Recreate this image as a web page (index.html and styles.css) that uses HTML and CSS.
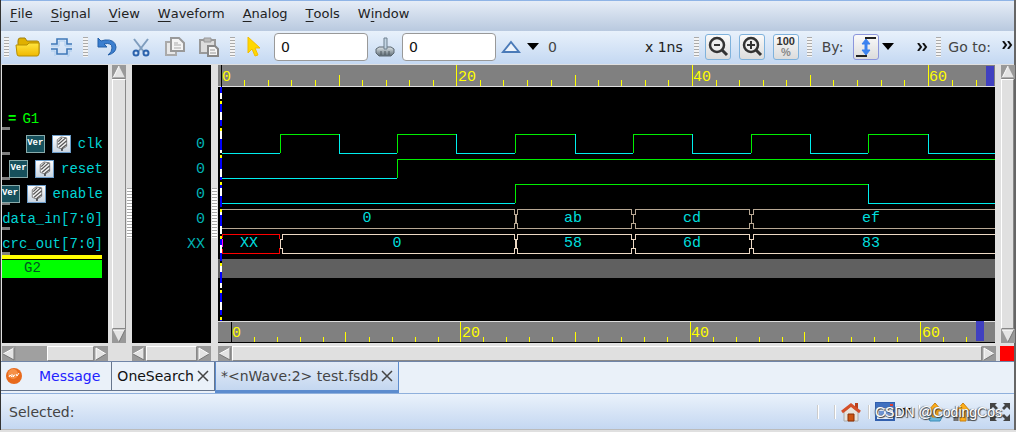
FILE: index.html
```html
<!DOCTYPE html>
<html lang="en">
<head>
<meta charset="utf-8">
<title>nWave</title>
<link rel="stylesheet" href="styles.css">
</head>
<body>
<svg class="defs" aria-hidden="true">
  <defs>
    <linearGradient id="gold" x2="0" y2="1"><stop offset="0" stop-color="#ffe640"/><stop offset="1" stop-color="#f0b800"/></linearGradient>
    <linearGradient id="steel" x2="0" y2="1"><stop offset="0" stop-color="#dfe6ea"/><stop offset="1" stop-color="#5d6b74"/></linearGradient>
    <symbol id="tri-up" viewBox="0 0 14 14"><path d="M7 1L13 13H1z" fill="#e4e4e4"/><path d="M7 1L1 13" stroke="#fff"/><path d="M1 13H13" stroke="#777"/></symbol>
    <symbol id="tri-down" viewBox="0 0 14 14"><path d="M1 1H13L7 13z" fill="#e4e4e4"/><path d="M1 1H13" stroke="#fff"/><path d="M13 1L7 13" stroke="#777"/></symbol>
    <symbol id="tri-left" viewBox="0 0 14 14"><path d="M1 7L12 1V13z" fill="#e4e4e4"/><path d="M1 7L12 1" stroke="#fff"/><path d="M12 1V13L1 7" fill="none" stroke="#777"/></symbol>
    <symbol id="tri-right" viewBox="0 0 14 14"><path d="M2 1L12 7L2 13z" fill="#e4e4e4"/><path d="M2 13V1L12 7" fill="none" stroke="#fff"/><path d="M2 13L12 7" stroke="#777"/></symbol>
    <symbol id="caret" viewBox="0 0 12 7"><path d="M0 0H12L6 7z" fill="#000"/></symbol>
    <symbol id="cross" viewBox="0 0 12 12"><path d="M1 1L11 11M11 1L1 11" stroke="#444" stroke-width="1.5"/></symbol>
    <symbol id="more" viewBox="0 0 11 8"><path d="M1 0L4 4L1 8M6 0L9 4L6 8" fill="none" stroke="#111" stroke-width="2"/></symbol>
    <symbol id="coil" viewBox="0 0 17 17"><path d="M4 4l4-3 6 1v9l-5 3-5-2z" fill="#f4f4f4" stroke="#777"/><path d="M5 6l4-4M5 9l8-7M6 12l8-7M9 13l5-4" stroke="#555" stroke-width="1.3"/><path d="M9 13v3" stroke="#333" stroke-width="1.5"/></symbol>
  </defs>
</svg>

<div class="app">
  <nav class="menubar">
    <button><u>F</u>ile</button>
    <button><u>S</u>ignal</button>
    <button><u>V</u>iew</button>
    <button><u>W</u>aveform</button>
    <button><u>A</u>nalog</button>
    <button><u>T</u>ools</button>
    <button>W<u>i</u>ndow</button>
  </nav>

  <div class="toolbar">
    <span class="grip"></span>
    <button class="tool" aria-label="Open"><svg width="26" height="22" viewBox="0 0 26 22"><path d="M3 5Q3 2 5 2H10L12 5H22Q24 5 24 7V17Q24 19 22 19H4Q3 19 3 17z" fill="#e0b000" stroke="#a08010"/><path d="M1 9H12L14 7H24V17Q24 20 22 20H4Q2 20 2 18z" fill="url(#gold)" stroke="#b89000"/></svg></button>
    <button class="tool" aria-label="Get signals"><svg width="24" height="20" viewBox="0 0 24 20"><path d="M1 7H7V2H17V7H22M1 12H7V17H17V12H22" fill="none" stroke="#3f78b8" stroke-width="1.6"/><path d="M1 9H9V4H15V9H22M1 14H5V19M17 19H19V14H22" fill="none" stroke="#a9cbee"/></svg></button>
    <span class="grip"></span>
    <button class="tool" aria-label="Undo"><svg width="22" height="20" viewBox="0 0 22 20"><path d="M2 1L2 10H11L8 7Q16 5 16 11Q16 15 12 18Q20 16 20 10Q19 2 9 3L5 4z" fill="#3b7fd0" stroke="#2560a8"/></svg></button>
    <button class="tool" aria-label="Cut"><svg width="20" height="20" viewBox="0 0 20 20"><path d="M3 2L13 15M17 2L7 15" stroke="#7f9dbe" stroke-width="2"/><circle cx="5" cy="16" r="2.5" fill="none" stroke="#2b62ac" stroke-width="2"/><circle cx="15" cy="16" r="2.5" fill="none" stroke="#2b62ac" stroke-width="2"/></svg></button>
    <button class="tool" aria-label="Copy"><svg width="22" height="20" viewBox="0 0 22 20"><path d="M2 5H12V18H2z" fill="#e8e8e8" stroke="#aaa" stroke-width="2"/><path d="M7 1H15L20 6V14H7z" fill="#f4f4f4" stroke="#999" stroke-width="2"/><path d="M10 6H14M10 8H17M10 11H17" stroke="#aaa"/></svg></button>
    <button class="tool" aria-label="Paste"><svg width="22" height="20" viewBox="0 0 22 20"><path d="M2 3H17V16H2z" fill="#ddd" stroke="#999" stroke-width="2"/><path d="M6 1H13V5H6z" fill="#bbb" stroke="#999"/><path d="M10 9H17L20 12V19H10z" fill="#f5f5f5" stroke="#888" stroke-width="2"/><path d="M12 13H17M12 16H18" stroke="#999"/></svg></button>
    <span class="grip"></span>
    <button class="tool arrow" aria-label="Select"><svg width="14" height="20" viewBox="0 0 14 20"><path d="M1 0V16L5 12L8 19L11 18L8 11H13z" fill="#ffd800" stroke="#f3bd00"/></svg></button>
    <input class="field" type="text" value="0" aria-label="Cursor time">
    <button class="tool" aria-label="Marker"><svg width="20" height="20" viewBox="0 0 20 20"><path d="M1 12L4 10H16L19 12V16L16 19H4L1 16z" fill="url(#steel)" stroke="#5b6770"/><path d="M6 14V18M10 14V18M14 14V18" stroke="#4c565d"/><path d="M9 1H12V12H9z" fill="#c3d5e4" stroke="#6e808f"/></svg></button>
    <input class="field" type="text" value="0" aria-label="Marker time">
    <button class="tool delta" aria-label="Delta"><svg width="20" height="14" viewBox="0 0 20 14"><path d="M10 2L18 12H2z" fill="#eef4fb" stroke="#4a7ab8" stroke-width="2"/></svg></button>
    <button class="drop" aria-label="Delta options"><svg width="12" height="7"><use href="#caret"/></svg></button>
    <output class="delta-value">0</output>
    <span class="unit">x 1ns</span>
    <span class="grip"></span>
    <div class="boxes">
      <button class="box" aria-label="Zoom out"><svg width="22" height="22" viewBox="0 0 22 22"><circle cx="10" cy="9" r="7" fill="#eee" stroke="#333" stroke-width="2.5"/><path d="M7 9H13" stroke="#333" stroke-width="2"/><path d="M15 14L20 19" stroke="#333" stroke-width="3"/></svg></button>
      <button class="box" aria-label="Zoom in"><svg width="22" height="22" viewBox="0 0 22 22"><circle cx="10" cy="9" r="7" fill="#eee" stroke="#333" stroke-width="2.5"/><path d="M6 9H14M10 5V13" stroke="#333" stroke-width="2"/><path d="M15 14L20 19" stroke="#333" stroke-width="3"/></svg></button>
      <button class="box percent"><span>100</span><span class="sign">%</span></button>
    </div>
    <span class="grip"></span>
    <label class="by" for="by">By:</label>
    <button class="box edge" id="by" aria-label="Any edge"><svg width="24" height="24" viewBox="0 0 24 24"><path d="M11 3H22M2 21H13" stroke="#222" stroke-width="2"/><path d="M12 4L16 9H13V15H16L12 20L8 15H11V9H8z" fill="#3b82f0" stroke="#3b82f0"/></svg></button>
    <button class="drop" aria-label="Edge options"><svg width="12" height="7"><use href="#caret"/></svg></button>
    <button class="more" aria-label="More tools"><svg width="11" height="8"><use href="#more"/></svg></button>
    <span class="grip"></span>
    <span class="goto">Go to:</span>
    <button class="more last" aria-label="More"><svg width="11" height="8"><use href="#more"/></svg></button>
  </div>

  <main class="work">
    <section class="names">
      <div class="row group"><span class="eq">=</span> G1</div>
      <div class="row"><span class="ver">Ver</span><span class="chip"><svg width="17" height="16"><use href="#coil"/></svg></span><span>clk</span></div>
      <div class="row"><span class="ver">Ver</span><span class="chip"><svg width="17" height="16"><use href="#coil"/></svg></span><span>reset</span></div>
      <div class="row"><span class="ver">Ver</span><span class="chip"><svg width="17" height="16"><use href="#coil"/></svg></span><span>enable</span></div>
      <div class="row"><span>data_in[7:0]</span></div>
      <div class="row"><span>crc_out[7:0]</span></div>
      <div class="active"><span>G2</span></div>
    </section>

    <div class="side">
      <div class="vbar">
        <button aria-label="Up"><svg width="14" height="14"><use href="#tri-up"/></svg></button>
        <div class="thumb"></div>
        <button aria-label="Down"><svg width="14" height="14"><use href="#tri-down"/></svg></button>
      </div>
      <div class="splitter"></div>
    </div>

    <section class="values">
      <span>0</span><span>0</span><span>0</span><span>0</span><span>XX</span>
    </section>

    <div class="splitter"></div>

    <section class="wave">
      <svg class="plot" width="100%" height="277" shape-rendering="crispEdges">
        <rect width="100%" height="21" fill="#808080"/>
        <path d="M26 15v6M50 15v6M73 15v6M97 15v6M121 10v11M144 15v6M168 15v6M191 15v6M215 15v6M238 0v21M262 15v6M285 15v6M309 15v6M333 15v6M357 10v11M380 15v6M403 15v6M427 15v6M450 15v6M474 0v21M498 15v6M521 15v6M545 15v6M568 15v6M592 10v11M615 15v6M639 15v6M663 15v6M686 15v6M710 0v21M734 15v6M758 15v6" class="tick"/>
        <g class="scale"><text x="4" y="16">0</text><text x="240" y="16">20</text><text x="475" y="16">40</text><text x="711" y="16">60</text></g>
        <rect x="768" y="1" width="8" height="20" fill="#4040c0"/>
        <path d="M0 21H2000" stroke="#ddd"/>

        <rect y="194" width="100%" height="19" fill="#606060"/>

        <path class="low" d="M3 88H62M121 69V88H179M238 69V88H297M357 69V88H415M474 69V88H533M592 69V88H650M710 69V88H777M3 113H179M3 138H297M650 119V138H777"/>
        <path class="high" d="M62 88V69H121M179 88V69H238M297 88V69H357M415 88V69H474M533 88V69H592M650 88V69H710M179 113V94H777M297 138V119H650"/>

        <path class="bus dim" d="M777 144H535v5h-2v9h2v5H777M3 144H296v5h2v9h-2v5H3zM299 144H413v5h2v9h-2v5H299v-5h-2v-9h2zM417 144H531v5h2v9h-2v5H417v-5h-2v-9h2z"/>
        <path class="bus" d="M777 169H535v5h-2v9h2v5H777M64 169H296v5h2v9h-2v5H64v-5h-2v-9h2zM299 169H413v5h2v9h-2v5H299v-5h-2v-9h2zM417 169H531v5h2v9h-2v5H417v-5h-2v-9h2z"/>
        <path d="M4 169H61v5M4 188H61v-5M4 169v4M4 188v-4" fill="none" stroke="#f00"/>
        <g class="data">
          <text x="149" y="157">0</text><text x="355" y="157">ab</text><text x="474" y="157">cd</text><text x="653" y="157">ef</text>
          <text x="31" y="182">XX</text><text x="179" y="182">0</text><text x="355" y="182">58</text><text x="474" y="182">6d</text><text x="653" y="182">83</text>
        </g>

        <path d="M3 22V256" stroke="#00f" stroke-width="2"/>
        <path d="M3 28V256" stroke="#fff" stroke-width="2" stroke-dasharray="8 11"/>
        <path d="M3 34V256" stroke="#000" stroke-width="2" stroke-dasharray="3 24"/>
        <path d="M3 36V256" stroke="#ff0" stroke-width="2" stroke-dasharray="3 24"/>
        <path d="M3 0V22" stroke="#000"/>
        <path d="M4 174V182" stroke="#f0f"/>

        <rect y="257" width="100%" height="20" fill="#808080"/>
        <path d="M0 256H2000" stroke="#ddd"/>
        <path d="M13 257v20" stroke="#000"/>
        <path class="tick" d="M36 272v5M59 272v5M82 272v5M105 272v5M127 267v10M151 272v5M174 272v5M197 272v5M220 272v5M242 257v20M265 272v5M288 272v5M311 272v5M334 272v5M357 267v10M380 272v5M403 272v5M426 272v5M449 272v5M472 257v20M495 272v5M518 272v5M541 272v5M564 272v5M586 267v10M610 272v5M633 272v5M656 272v5M679 272v5M702 257v20M725 272v5M748 272v5"/>
        <g class="scale"><text x="14" y="272">0</text><text x="244" y="272">20</text><text x="473" y="272">40</text><text x="704" y="272">60</text></g>
        <rect x="758" y="256" width="8" height="20" fill="#4040c0"/>
      </svg>
    </section>

    <div class="vbar right">
      <button aria-label="Up"><svg width="14" height="14"><use href="#tri-up"/></svg></button>
      <div class="thumb"></div>
      <button aria-label="Down"><svg width="14" height="14"><use href="#tri-down"/></svg></button>
    </div>

    <div class="hbar">
      <button aria-label="Left"><svg width="14" height="14"><use href="#tri-left"/></svg></button>
      <div class="thumb half"></div>
      <button aria-label="Right"><svg width="14" height="14"><use href="#tri-right"/></svg></button>
    </div>
    <span></span>
    <div class="hbar">
      <button aria-label="Left"><svg width="14" height="14"><use href="#tri-left"/></svg></button>
      <div class="thumb"></div>
      <button aria-label="Right"><svg width="14" height="14"><use href="#tri-right"/></svg></button>
    </div>
    <span></span>
    <div class="hbar">
      <button aria-label="Left"><svg width="14" height="14"><use href="#tri-left"/></svg></button>
      <div class="thumb"></div>
      <button aria-label="Right"><svg width="14" height="14"><use href="#tri-right"/></svg></button>
    </div>
    <div class="alert"></div>
  </main>

  <div class="tabs">
    <div class="tab message"><svg width="16" height="16" viewBox="0 0 16 16"><circle cx="8" cy="8" r="8" fill="#e86a1c"/><circle cx="7" cy="6" r="5" fill="#f59048"/><path d="M3 9l1-2 2 2V6M7 8l2-1M7 8l1 1M10 6l1 2 2-3" fill="none" stroke="#fff"/></svg><button>Message</button></div>
    <div class="tab"><button>OneSearch</button><button class="close" aria-label="Close OneSearch"><svg width="12" height="12"><use href="#cross"/></svg></button></div>
    <div class="tab selected"><button>*&lt;nWave:2&gt; test.fsdb</button><button class="close" aria-label="Close nWave"><svg width="12" height="12"><use href="#cross"/></svg></button></div>
  </div>

  <footer class="status">
    <span class="selected-label">Selected:</span>
    <div class="status-tools">
      <i></i><i></i>
      <button aria-label="Home"><svg width="20" height="20" viewBox="0 0 20 20"><path d="M3 10L10 4L17 10V19H3z" fill="#e8e4dc" stroke="#aaa"/><path d="M14 1h3v6h-3z" fill="#b8401c"/><path d="M1 10L10 3L19 10" fill="none" stroke="#d4502a" stroke-width="3"/><path d="M7 12H13V19H7z" fill="#cc5510" stroke="#883008"/></svg></button>
      <i></i>
      <button class="windows" aria-label="Windows"><svg width="20" height="19" viewBox="0 0 20 19"><path d="M1 1H19V18H1z" fill="#e7effa" stroke="#315fae" stroke-width="2"/><path d="M1 1H19V6H1z" fill="#3f70c0"/><path d="M4 9H9V15H4zM11 9H16V15H11z" fill="#6d94d4"/><path d="M15 2h3v2h-3z" fill="#e04030"/></svg><svg width="12" height="7"><use href="#caret"/></svg></button>
      <i></i>
      <button class="up" aria-label="Dock"><svg width="20" height="20" viewBox="0 0 20 20"><path d="M2 13L5 19H15L18 13" fill="#6ab8dc" stroke="#3b8cb8"/><path d="M10 1L17 9H13V15H7V9H3z" fill="#ffae18" stroke="#c88010"/></svg></button>
      <button class="up" aria-label="Undock"><svg width="20" height="20" viewBox="0 0 20 20"><path d="M1 19V13H5V19M15 19V11H19V19" fill="#777" stroke="#666"/><path d="M10 1L17 9H13V19H7V9H3z" fill="#ffae18" stroke="#c88010"/></svg></button>
      <button class="full" aria-label="Full screen"><svg width="22" height="20" viewBox="0 0 22 20"><path d="M1 1H8L6 3L9 6L7 8L4 5L1 8zM21 1H14L16 3L13 6L15 8L18 5L21 8zM1 19H8L6 17L9 14L7 12L4 15L1 12zM21 19H14L16 17L13 14L15 12L18 15L21 12z" fill="#444"/></svg></button>
    </div>
    <span class="watermark">CSDN @CodingCos</span>
  </footer>
</div>
</body>
</html>
```

FILE: styles.css
```css
* { box-sizing: border-box; }

body {
  margin: 0;
  background: #e0e0e0;
  font: 13px/18px "DejaVu Sans", sans-serif;
  color: #222;
}

button {
  display: flex;
  align-items: center;
  justify-content: center;
  margin: 0;
  padding: 0;
  border: 0;
  background: none;
  color: inherit;
  font: inherit;
}

svg { display: block; flex: none; }

.defs { position: absolute; width: 0; height: 0; }

.app {
  display: flex;
  flex-direction: column;
  border-left: 1px solid #333;
  border-right: 2px solid #666;
}

/* Menu and tool bars */
.menubar {
  display: flex;
  gap: 18px;
  height: 31px;
  padding: 0 9px 4px;
  border-top: 1px solid #8fb4e6;
  background: linear-gradient(#e6edf7, #b9c9df);
}

.menubar u { text-underline-offset: 3px; }

.toolbar {
  display: flex;
  align-items: center;
  height: 33px;
  padding: 0 1px 2px 3px;
  background: linear-gradient(#e8f1fb, #c4d8f2);
  color: #444;
  font-size: 14px;
}

.grip {
  flex: none;
  width: 5px;
  height: 20px;
  background: repeating-linear-gradient(#aaa 0 1px, #f4f4f4 1px 3px);
}

.tool { flex: none; width: 34px; height: 28px; }
.grip + .tool { margin-left: 2px; }
.tool + .grip { margin-left: 4px; }
.arrow { margin-right: 3px; }

.field {
  flex: none;
  width: 94px;
  height: 28px;
  padding: 0 6px;
  border: 1px solid #999;
  border-radius: 4px;
  background: #fff;
  color: #111;
  font: inherit;
}

.delta { width: 30px; }
.drop { width: 14px; height: 26px; }
.delta-value { margin-left: 8px; }
.unit { margin: 0 11px 0 auto; color: #222; }
.boxes { display: flex; gap: 8px; margin: 0 8px 0 6px; }

.box {
  width: 26px;
  height: 26px;
  border: 1px solid #7fb2dc;
  border-radius: 3px;
  background: linear-gradient(#fafafa, #dcdcdc);
}

.percent {
  flex-direction: column;
  color: #333;
  font: bold 11px/11px "Liberation Sans", sans-serif;
}

.sign { color: #888; }

.by { margin: 0 10px; }
.edge { margin-right: 2px; border-color: #8c96dc; }
.more { width: 11px; height: 26px; margin: 0 8px 0 22px; }
.goto { margin-left: 7px; }
.last { margin: 0 0 3px 11px; }

/* Signal names, values and waveforms */
.work {
  display: grid;
  grid-template-columns: 106px 24px 79px 7px 1fr 18px;
  grid-template-rows: 278px 15px;
  row-gap: 3px;
  padding: 1px 0 0 1px;
  background: #e0e0e0;
  font: 15px/20px "Liberation Mono", monospace;
}

.names {
  overflow: hidden;
  padding-top: 40px;
  background: #000;
  color: #00d4d4;
  font-size: 14px;
}

.row {
  display: flex;
  align-items: center;
  justify-content: flex-end;
  gap: 7px;
  height: 25px;
  padding: 2px 5px 0 0;
  background: linear-gradient(#808080, #808080) 0 22px / 8px 3px no-repeat;
}

.group { justify-content: flex-start; padding-left: 6px; gap: 6px; color: #0f0; }
.eq { font-weight: bold; }

.ver {
  flex: none;
  width: 19px;
  height: 18px;
  border: 1px solid #8aa;
  background: #16505c;
  color: #fff;
  font: bold 9px/15px "Liberation Mono", monospace;
  text-align: center;
}

.chip {
  flex: none;
  width: 19px;
  height: 18px;
  border: 1px solid #6c9cc8;
  background: linear-gradient(#fff, #c8d4e0);
}

.active {
  margin-right: 6px;
  border-top: 4px solid #ff0;
  background: linear-gradient(#000, #000) 0 0 / 100% 1px no-repeat, #0f0;
  color: #052;
}

.active span { display: block; height: 19px; padding-left: 22px; line-height: 19px; }

.side { display: flex; justify-content: space-between; padding-left: 4px; }

.splitter {
  width: 5px;
  margin: 0 auto;
  background: repeating-linear-gradient(#aaa 0 1px, #fff 1px 3px) 0 123px / 5px 50px no-repeat;
}

.side .splitter { margin: 0; }

.vbar { display: flex; flex-direction: column; width: 14px; background: #888; }
.vbar button, .hbar button { flex: none; width: 14px; height: 14px; background: #999; }

.thumb {
  flex: 1;
  border: 1px solid;
  border-color: #fff #888 #888 #fff;
  background: #e0e0e0;
}

.vbar.right { margin-left: 5px; width: 13px; }

.values {
  display: flex;
  flex-direction: column;
  padding: 66px 6px 0 0;
  background: #000;
  color: #00b4b4;
  text-align: right;
}

.values span { height: 25px; line-height: 27px; }

.wave { overflow: hidden; min-width: 0; margin-right: 1px; background: #000; }
.tick { fill: none; stroke: #ff0; }
.scale { fill: #ff0; }
.low, .high, .bus { fill: none; stroke: #0ee; }
.high { stroke: #0e0; }
.bus { stroke: #ecd8c4; }
.dim { stroke: #b8a894; }
.data { fill: #0dd; text-anchor: middle; }

.hbar { display: flex; min-width: 0; background: #a0a0a0; }
.hbar button { height: 15px; }
.half { margin-left: 31px; }
.alert { margin-left: 4px; background: #f00; }

/* Tabs and status */
.tabs {
  display: flex;
  align-items: flex-start;
  height: 33px;
  border-top: 1px solid #7085a8;
  border-bottom: 1px solid #8fb0dc;
  background: #eaf1f9;
  font-size: 14px;
}

.tab {
  display: flex;
  align-items: center;
  gap: 3px;
  height: 29px;
  padding: 0 5px;
  border-right: 1px solid #66758c;
  border-bottom: 1px solid #66758c;
  color: #111;
}

.message { gap: 17px; padding-right: 11px; color: #22f; }

.selected {
  height: 31px;
  border: solid #5c8cce;
  border-width: 0 1px 3px;
  background: linear-gradient(#e2ebf7, #c4d7f0);
  color: #444;
}

.status {
  display: flex;
  position: relative;
  align-items: center;
  justify-content: space-between;
  height: 36px;
  padding: 0 3px 0 8px;
  border-bottom: 1px solid #bbb;
  background: linear-gradient(#eaf2fb, #c4d7f1);
  font-size: 14px;
  color: #444;
}

.status-tools { display: flex; align-items: center; gap: 7px; }
.status-tools i { width: 2px; height: 14px; margin-right: 8px; background: #ccc; border-right: 1px solid #fff; }
.status-tools i + button { margin-left: -10px; }
.windows { gap: 4px; }
.up { margin-right: 1px; }
.full { margin-left: 8px; }

.watermark {
  position: absolute;
  right: 12px;
  bottom: 7px;
  color: #fff;
  font: 14px/20px "Liberation Sans", sans-serif;
  text-shadow: 1px 1px 1px #333, -1px 0 1px #666;
}
```
